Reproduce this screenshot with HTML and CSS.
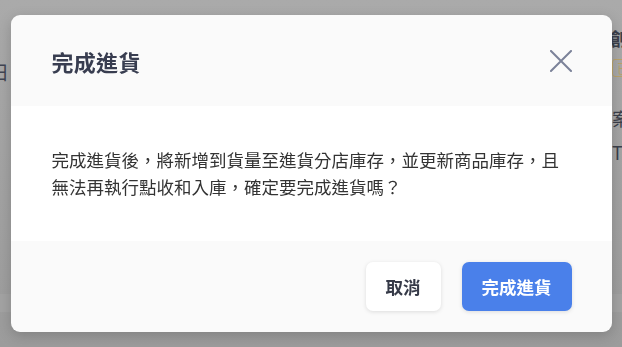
FILE: index.html
```html
<!DOCTYPE html>
<html lang="zh-Hant">
<head>
    <meta charset="UTF-8">
    <meta name="viewport" content="width=device-width, initial-scale=1.0">
    <title>完成進貨</title>
    <link rel="stylesheet" href="styles.css">
</head>
<body>
    <div class="page">
        <div class="page-left">
            <span class="page-date">日</span>
        </div>
        <div class="page-right">
            <span class="page-title">創貨</span>
            <span class="page-tag">已</span>
            <span class="page-note first">案件</span>
            <span class="page-note">T</span>
        </div>
        <div class="page-band"></div>
    </div>

    <div class="overlay">
        <div class="modal">
            <div class="modal-header">
                <h2 class="modal-title">完成進貨</h2>
                <button class="close-btn" aria-label="關閉">
                    <svg width="22" height="22" viewBox="0 0 22 22">
                        <path d="M1 1 L21 21 M21 1 L1 21" stroke="#7b8299" stroke-width="2" stroke-linecap="square" fill="none"/>
                    </svg>
                </button>
            </div>
            <div class="modal-body">
                <p>完成進貨後，將新增到貨量至進貨分店庫存，並更新商品庫存，且無法再執行點收和入庫，確定要完成進貨嗎？</p>
            </div>
            <div class="modal-footer">
                <button class="btn btn-cancel">取消</button>
                <button class="btn btn-confirm">完成進貨</button>
            </div>
        </div>
    </div>
</body>
</html>
```

FILE: styles.css
```css
html, body {
    margin: 0;
    padding: 0;
    height: 100%;
}

body {
    font-family: "Noto Sans CJK TC", "Noto Sans", sans-serif;
    background: linear-gradient(#aaaaaa, #9c9c9c);
    overflow: hidden;
}

/* page behind the overlay */
.page {
    height: 100%;
    display: flex;
    justify-content: space-between;
    position: relative;
}

.page-left {
    padding-top: 58px;
    width: 10px;
    overflow: hidden;
}

.page-date {
    display: block;
    margin-left: -10px;
    font-size: 19px;
    color: #414553;
}

.page-right {
    width: 10px;
    overflow: hidden;
    display: flex;
    flex-direction: column;
    align-items: flex-start;
    padding-top: 27px;
    font-size: 18px;
    color: #3b3f4b;
    white-space: nowrap;
}

.page-title {
    margin-left: -3px;
    font-weight: bold;
    line-height: 22px;
}

.page-tag {
    margin-top: 10px;
    border: 1px solid #b9a36a;
    border-radius: 3px;
    font-size: 13px;
    line-height: 16px;
    padding: 0 4px;
    color: #b9a36a;
}

.page-note {
    margin-top: 12px;
    line-height: 22px;
    color: #3b3f4b;
}

.page-note.first {
    margin-top: 30px;
}

.page-band {
    position: absolute;
    left: 0;
    right: 0;
    top: 294px;
    height: 18px;
    background: #a3a3a3;
}

/* modal */
.overlay {
    position: fixed;
    inset: 0;
    display: flex;
    align-items: center;
    justify-content: center;
}

.modal {
    width: 601px;
    border-radius: 9px;
    overflow: hidden;
    background: #fafafa;
    box-shadow: 0 4px 14px rgba(0, 0, 0, 0.18);
}

.modal-header {
    height: 91px;
    display: flex;
    align-items: center;
    justify-content: space-between;
    padding: 0 40px 0 41px;
    box-sizing: border-box;
}

.modal-title {
    margin: 0;
    font-size: 22px;
    font-weight: bold;
    color: #383d50;
    letter-spacing: 0.3px;
}

.close-btn {
    background: none;
    border: none;
    padding: 0;
    width: 22px;
    height: 22px;
    cursor: pointer;
    display: flex;
}

.modal-body {
    background: #ffffff;
    height: 135px;
    box-sizing: border-box;
    padding: 40px 41px;
}

.modal-body p {
    margin: 0;
    font-size: 17.5px;
    line-height: 27px;
    color: #333333;
}

.modal-footer {
    height: 91px;
    display: flex;
    align-items: center;
    justify-content: flex-end;
    gap: 21px;
    padding: 0 40px;
    box-sizing: border-box;
}

.btn {
    height: 49px;
    padding: 0 20px;
    border: none;
    border-radius: 7px;
    font-family: inherit;
    font-size: 17.5px;
    font-weight: bold;
    cursor: pointer;
    box-shadow: 0 1px 4px rgba(0, 0, 0, 0.12);
}

.btn-cancel {
    background: #ffffff;
    color: #363a48;
}

.btn-confirm {
    background: #4a80ea;
    color: #ffffff;
}
```
